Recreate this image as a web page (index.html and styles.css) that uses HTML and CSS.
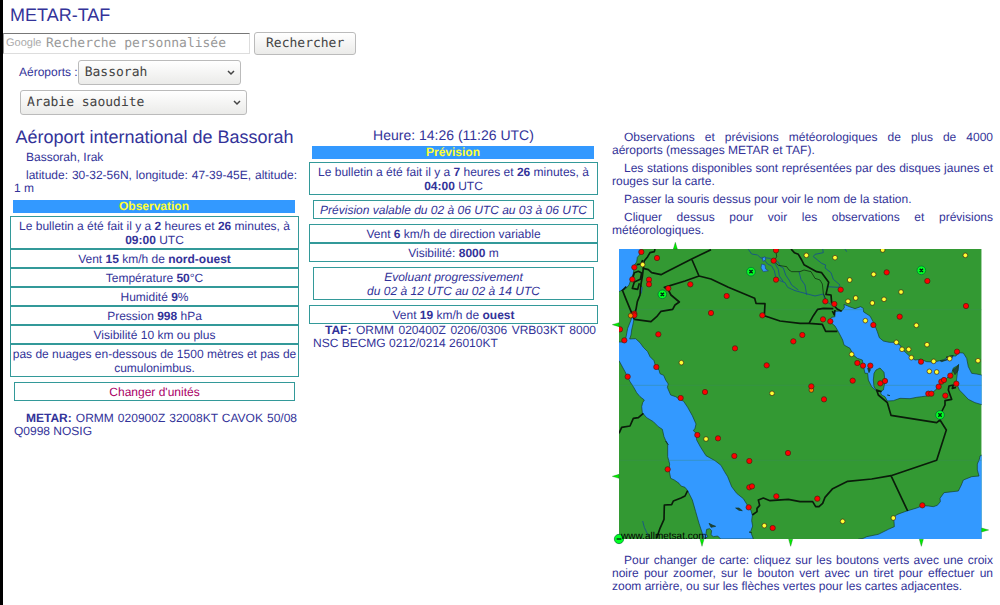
FILE: index.html
```
<!DOCTYPE html>
<html lang="fr">
<head>
    <meta charset="UTF-8">
    <meta name="viewport" content="width=device-width, initial-scale=1.0">
    <title>METAR-TAF</title>
    <link rel="stylesheet" href="styles.css">
</head>
<body>
    <header class="header">
        <h1 class="title">METAR-TAF</h1>
        <form class="search" action="#">
            <div class="search-field">
                <label class="search-logo" for="q">Google</label>
                <input class="search-input" id="q" type="text" placeholder="Recherche personnalisée">
            </div>
            <button class="search-button" type="submit">Rechercher</button>
        </form>
        <form class="airports" action="#">
            <div class="airport-row">
                <label for="airport">Aéroports :</label>
                <select class="select select-airport" id="airport">
                    <option>Bassorah</option>
                </select>
            </div>
            <select class="select select-country" id="country" aria-label="Pays">
                <option>Arabie saoudite</option>
            </select>
        </form>
    </header>

    <main class="columns">
        <section class="column">
            <h2 class="airport-name">Aéroport international de Bassorah</h2>
            <p class="text">Bassorah, Irak</p>
            <p class="text">latitude: 30-32-56N, longitude: 47-39-45E, altitude: 1&nbsp;m</p>
            <h3 class="bar">Observation</h3>
            <div class="boxes">
                <div class="box">Le bulletin a été fait il y a <b>2</b> heures et <b>26</b> minutes, à <b>09:00</b> UTC</div>
                <div class="box">Vent <b>15</b> km/h de <b>nord-ouest</b></div>
                <div class="box">Température <b>50</b>°C</div>
                <div class="box">Humidité <b>9</b>%</div>
                <div class="box">Pression <b>998</b> hPa</div>
                <div class="box">Visibilité 10 km ou plus</div>
                <div class="box">pas de nuages en-dessous de 1500 mètres et pas de cumulonimbus.</div>
            </div>
            <div class="box box-inset"><a class="link" href="#">Changer d'unités</a></div>
            <p class="text report"><b>METAR:</b> ORMM 020900Z 32008KT CAVOK 50/08 Q0998 NOSIG</p>
        </section>

        <section class="column">
            <p class="time">Heure: 14:26 (11:26 UTC)</p>
            <h3 class="bar">Prévision</h3>
            <div class="box">Le bulletin a été fait il y a <b>7</b> heures et <b>26</b> minutes, à <b>04:00</b> UTC</div>
            <div class="box box-inset"><i>Prévision valable du 02 à 06 UTC au 03 à 06 UTC</i></div>
            <div class="boxes">
                <div class="box">Vent <b>6</b> km/h de direction variable</div>
                <div class="box">Visibilité: <b>8000</b> m</div>
            </div>
            <div class="box box-inset"><i>Evoluant progressivement<br>du 02 à 12 UTC au 02 à 14 UTC</i></div>
            <div class="box box-last">Vent <b>19</b> km/h de <b>ouest</b></div>
            <p class="text"><b>TAF:</b> ORMM 020400Z 0206/0306 VRB03KT 8000 NSC BECMG 0212/0214 26010KT</p>
        </section>

        <section class="column column-map">
            <p class="text">Observations et prévisions météorologiques de plus de 4000 aéroports (messages METAR et TAF).</p>
            <p class="text">Les stations disponibles sont représentées par des disques jaunes et rouges sur la carte.</p>
            <p class="text">Passer la souris dessus pour voir le nom de la station.</p>
            <p class="text">Cliquer dessus pour voir les observations et prévisions météorologiques.</p>

            <svg class="map" viewBox="21 6 1131 915" role="img" aria-label="Carte des stations">
                <defs>
                    <marker id="red" markerUnits="userSpaceOnUse" markerWidth="20" markerHeight="20" refX="10" refY="10"><circle class="dot-red" cx="10" cy="10" r="8"/></marker>
                    <marker id="yellow" markerUnits="userSpaceOnUse" markerWidth="20" markerHeight="20" refX="10" refY="10"><circle class="dot-yellow" cx="10" cy="10" r="7"/></marker>
                    <marker id="zoom" markerUnits="userSpaceOnUse" markerWidth="32" markerHeight="32" refX="16" refY="16">
                        <circle class="dot-green" cx="16" cy="16" r="13"/>
                        <path class="cross" d="M11 11L21 21M21 11L11 21M16 12V20"/>
                    </marker>
                    <clipPath id="frame"><rect x="42" y="27" width="1088" height="870"/></clipPath>
                </defs>

                <g clip-path="url(#frame)">
                    <rect class="land" x="42" y="27" width="1088" height="870"/>

                    <!-- Mediterranean, Red Sea -->
                    <path class="sea" d="M38 23H110L103 45 97 52 95 66 88 75 85 100 78 118 72 135 60 148 52 150 42 155H38Z"/>
                    <path class="sea" d="M80 232L87 236 84 252 80 270 78 285 74 297 92 296 105 308 115 322 128 335 135 350 147 362 152 380 162 390 165 401 176 406 182 420 190 432 187 442 197 465 212 470 221 476 236 484 248 502 262 527 273 552 270 565 265 572 274 580 275 600 287 622 303 647 330 662 348 676 358 694 368 710 380 740 395 760 415 776 425 792 431 802 438 812 442 826 440 842 443 858 437 875 445 897H347L338 888 325 890 318 884 320 872 314 866 305 868 303 880 308 890 298 897 292 880 282 850 272 815 262 780 248 752 240 742 228 738 222 730 208 720 197 715 192 690 194 672 188 650 188 615 183 604 177 590 172 568 160 560 145 545 125 533 112 518 110 500 113 488 118 480 105 470 95 458 85 440 75 425 60 395 42 362H38V306H58L62 297 68 265 78 240Z"/>
                    <path class="isle" d="M392 804L402 804 412 812 402 811ZM312 850L322 855 332 859 318 862ZM182 603L190 614ZM432 876L440 878Z"/>

                    <!-- Persian Gulf -->
                    <g transform="translate(585 0)">
                        <path class="sea" d="M86 242L95 232 105 230 103 214 125 213 133 203 132 193 148 200 165 206 182 200 190 205 191 216 210 228 222 250 232 275 238 293 250 303 268 307 285 307 300 315 307 328 325 345 345 360 362 358 380 365 401 366 430 360 450 348 468 348 475 338 490 339 500 355 505 380 515 400 530 402 549 406V495L525 488 505 478 490 462 478 450 474 440 468 432 472 400 475 376 460 384 455 400 440 415 425 425 412 445 395 460 380 468 365 470 350 472 330 476 300 475 280 482 262 483 255 470 245 465 240 455 250 450 255 425 252 397 240 384 228 390 222 400 220 420 222 440 232 455 215 440 205 420 203 400 195 400 190 378 187 360 172 355 160 345 150 325 132 315 128 300 115 275 105 258Z"/>
                        <path class="isle" d="M420 362L445 358 438 351 460 346 455 355 425 365ZM208 380L211 390 207 398 203 385ZM262 465L270 467Z"/>
                        <path class="isle" d="M458 390L470 382 476 373 474 392 465 404Z"/>
                    </g>

                    <!-- Arabian Sea -->
                    <path class="sea" transform="translate(585 450)" d="M175 447L190 445 200 440 235 433 265 418 283 410 282 395 280 385 290 374 320 363 350 354 368 347 385 348 400 350 412 346 421 335 420 325 432 308 475 303 484 285 490 270 515 260 537 258 532 240 532 222 538 208 540 198 549 193V451H175Z"/>

                    <path class="grid-line" d="M42 209H1130M42 436H1130M42 661H1130"/>

                    <!-- rivers and lakes -->
                    <path class="river" d="M430 28L440 42 458 45 465 52 478 60 488 72 500 78 508 92 512 110 525 122 540 128 548 142 570 152 600 160 630 168 655 162M470 52L495 55 506 64 520 66 525 78 535 84 542 105 552 120 560 135 580 150M506 64L520 88 523 108 535 125M653 27L655 38 630 43 625 50 650 70 662 75 660 84 678 98 685 118 705 135 700 142 665 140M582 95L588 118 600 135 605 165M655 162L660 182 682 196 705 210M113 843L118 862 130 888M720 27L725 35"/>
                    <path class="lake" d="M472 54L480 50 482 60 474 64ZM470 72L480 75 482 87 490 92 475 95 468 84ZM108 138L112 142 109 160 105 155Z"/>

                    <!-- borders -->
                    <path class="border" d="M150 27L148 35 135 38 128 50 118 62 115 85 130 89 140 98 168 104 182 97 260 57 318 29M260 57L282 108 240 123 178 142 190 150 198 165 223 186 210 195 203 208 168 214 155 230 138 245 88 238M282 108L318 117 370 142 449 175 453 190 480 191 478 227 525 243 585 250 612 250 652 253 662 274 697 274M612 250L625 227 638 208 655 205 685 206M558 27L568 38 580 43 590 60 597 74 635 95 650 98 671 127 663 163 678 165 680 188 697 208 710 214"/>
                    <path class="border" d="M113 60L108 72 95 74M115 85L112 110 108 132 105 165 97 185 93 208 86 235M52 150L62 175 88 238M64 140L50 153M82 118L88 98 100 94 110 99 106 118 88 126 82 145 98 148 103 130M682 213L688 225 690 210"/>
                    <path class="border" d="M42 580L50 562 75 558 85 535 100 533 115 520M248 752L240 768 228 774 205 783 200 794 178 795 177 838 165 865 155 895M442 825L456 815 456 805 464 796 460 780 475 774 495 782 550 778 585 785 623 785 632 800 642 800 653 790 660 772 683 746 728 724 800 717 858 707 995 661 1024 570 1005 540 995 548 858 526 847 488 820 465 815 450 830 455M858 707L908 813M1005 540L1005 525 1020 495 1020 482 1040 478 1030 450 1032 438 1045 435 1042 445 1053 442"/>
                    <path class="border-thin" d="M512 27L515 50 507 64 520 76 545 80 552 90 560 95 585 95 597 90 618 95 630 115 645 120 652 132 655 160 662 178"/>

                    <!-- stations -->
                    <polyline class="stations-red" points="109,36 156,54 88,82 82,118 132,119 132,133 190,145 256,133 88,221 88,226 365,168 318,219 472,226 513,31 506,62 513,119 45,268 58,301 160,283 390,325 565,304 592,285 154,381 68,410 485,376 300,456"/>
                    <polyline class="stations-red" transform="translate(585 0)" points="122,149 76,184 103,192 260,97 382,123 498,198 299,230 69,238 91,244 220,255 471,335 363,365 172,369 189,377 211,377 158,422 241,430 255,423 451,407 424,425 432,420 416,440 469,431 385,461 394,461 436,467"/>
                    <polyline class="stations-red" transform="translate(0 450)" points="227,24 277,135 339,145 388,198 433,213 549,189 188,238 433,292 441,289 514,319 431,352 503,414 657,28 637,326 952,346"/>
                    <polyline class="stations-yellow" points="113,74 229,368 501,460 303,597 478,857 713,844 865,834"/>
                    <polyline class="stations-yellow" transform="translate(585 0)" points="19,46 105,53 248,30 496,46 221,103 149,120 303,156 167,174 144,184 217,189 252,178 196,242 349,256 289,307 306,328 326,328 334,353 381,314 401,364 449,356 534,362 388,394 410,396 155,343"/>
                    <circle class="dot-orange" cx="77" cy="227" r="7"/>
                    <circle class="dot-orange" cx="619" cy="450" r="7"/>
                    <circle class="dot-red" cx="619" cy="439" r="8"/>
                    <polyline class="stations-zoom" points="438,95 172,163 949,91 1005,525"/>
                </g>

                <!-- neighbouring maps -->
                <path class="arrow" d="M205 27L211 7 217 27ZM42 248L22 254 42 260ZM42 703L22 709 42 715ZM285 898H297L291 919ZM551 898H563L557 919ZM943 898H955L949 919ZM1130 864V876L1151 870Z"/>
                <circle class="dot-green" cx="42" cy="897" r="14"/>
                <path class="cross" d="M35 897H49"/>
                <text class="map-credit" x="48" y="896">www.allmetsat.com</text>
            </svg>

            <p class="text">Pour changer de carte: cliquez sur les boutons verts avec une croix noire pour zoomer, sur le bouton vert avec un tiret pour effectuer un zoom arrière, ou sur les flèches vertes pour les cartes adjacentes.</p>
        </section>
    </main>
</body>
</html>
```
FILE: styles.css
```
* {
    margin: 0;
    padding: 0;
    box-sizing: border-box;
}

body {
    min-height: 100vh;
    border-left: 3px solid #000;
    background: #fff;
    color: #339;
    font-family: "Liberation Sans", Arial, sans-serif;
    font-size: 12px;
    line-height: 13px;
    text-rendering: geometricPrecision;
}

/* header */
.title {
    padding: 5px 7px 7px;
    font-size: 18px;
    font-weight: normal;
    line-height: 20px;
}

.search {
    display: flex;
    align-items: center;
    gap: 4px;
}

.search-field {
    position: relative;
}

.search-logo {
    position: absolute;
    left: 3px;
    top: 4px;
    color: #aaa;
    font-size: 11px;
}

.search-input {
    width: 247px;
    height: 21px;
    padding-left: 42px;
    border: 1px solid #ddd;
    border-top-color: #777;
    border-left-color: #999;
    color: #444;
    font-family: "DejaVu Sans Mono", monospace;
    font-size: 13px;
    text-rendering: geometricPrecision;
}

.search-input::placeholder {
    color: #999;
}

.search-button,
.select {
    border: 1px solid #bbb;
    border-radius: 3px;
    background: linear-gradient(#fff, #ebebe9);
    color: #444;
    font-family: "DejaVu Sans Mono", monospace;
    font-size: 13px;
    text-rendering: geometricPrecision;
}

.search-button {
    height: 23px;
    padding: 0 11px;
}

.airports {
    padding: 5px 16px 0;
}

.airport-row {
    display: flex;
    align-items: center;
    margin-bottom: 5px;
}

.select {
    display: block;
    height: 25px;
    padding: 0 20px 0 6px;
    appearance: none;
    background:
        url("data:image/svg+xml,%3Csvg xmlns='http://www.w3.org/2000/svg' width='8' height='6'%3E%3Cpath d='M1 1l3 3 3-3' fill='none' stroke='%23444' stroke-width='1.5'/%3E%3C/svg%3E") no-repeat right 5px center,
        linear-gradient(#fff, #ebebe9);
}

.select-airport {
    width: 163px;
}

.select-country {
    width: 227px;
    margin-left: 1px;
}

/* columns */
.columns {
    display: grid;
    grid-template-columns: 289fr 289fr 385fr;
    gap: 10px;
    padding: 12px 7px 10px 7px;
}

.text {
    margin-bottom: 5px;
    padding: 0 2px 0 4px;
    text-align: justify;
    text-indent: 12px;
}

.airport-name {
    margin-bottom: 4px;
    font-size: 18px;
    font-weight: normal;
    line-height: 20px;
    text-align: center;
}

.time {
    margin-bottom: 3px;
    font-size: 14px;
    line-height: 16px;
    text-align: center;
}

.bar {
    margin: 0 4px 3px 3px;
    background: #39f;
    color: #ff3;
    font-size: 12px;
    line-height: 13px;
    text-align: center;
}

.boxes,
.box {
    margin-bottom: 5px;
}

.box {
    padding: 2px 1px 1px;
    border: 1px solid #399;
    line-height: 14px;
    text-align: center;
}

.boxes .box,
.box-last {
    margin-bottom: 0;
}

.box-inset {
    margin-left: 4px;
    margin-right: 4px;
}

.link {
    color: #a06;
    text-decoration: none;
}

.report {
    margin-top: 11px;
}

.column-map {
    padding: 4px 0 0 4px;
}

.column-map .text {
    padding: 0;
}

/* map */
.map {
    display: block;
    width: calc(100% - 4px);
    margin-bottom: 7px;
}

.land {
    fill: #393;
}

.sea {
    fill: #39f;
    stroke: #153d2c;
    stroke-width: 2;
}

.lake {
    fill: #39f;
    stroke: #247;
    stroke-width: 2;
}

.isle {
    fill: #243;
    stroke: #132;
    stroke-width: 2;
}

.river {
    fill: none;
    stroke: #1a5a80;
    stroke-width: 3;
}

.grid-line {
    stroke: #3a8a60;
    stroke-width: 1;
}

.border,
.border-thin {
    fill: none;
    stroke: #0a1c0a;
    stroke-width: 5;
    stroke-linejoin: round;
}

.border-thin {
    stroke-width: 2;
}

.stations-red,
.stations-yellow,
.stations-zoom {
    fill: none;
    stroke: none;
}

.stations-red {
    marker: url(#red);
}

.stations-yellow {
    marker: url(#yellow);
}

.stations-zoom {
    marker: url(#zoom);
}

.dot-red,
.dot-yellow,
.dot-orange,
.dot-green {
    stroke: #421;
    stroke-width: 2;
}

.dot-red {
    fill: #f00;
}

.dot-yellow {
    fill: #ff3;
}

.dot-orange {
    fill: #f80;
}

.dot-green {
    fill: #0f2;
    stroke: #063;
}

.cross {
    fill: none;
    stroke: #021;
    stroke-width: 4;
}

.arrow {
    fill: #0e0;
    stroke: #060;
    stroke-width: 1;
}

.map-credit {
    fill: #000;
    font-size: 30px;
}
```
